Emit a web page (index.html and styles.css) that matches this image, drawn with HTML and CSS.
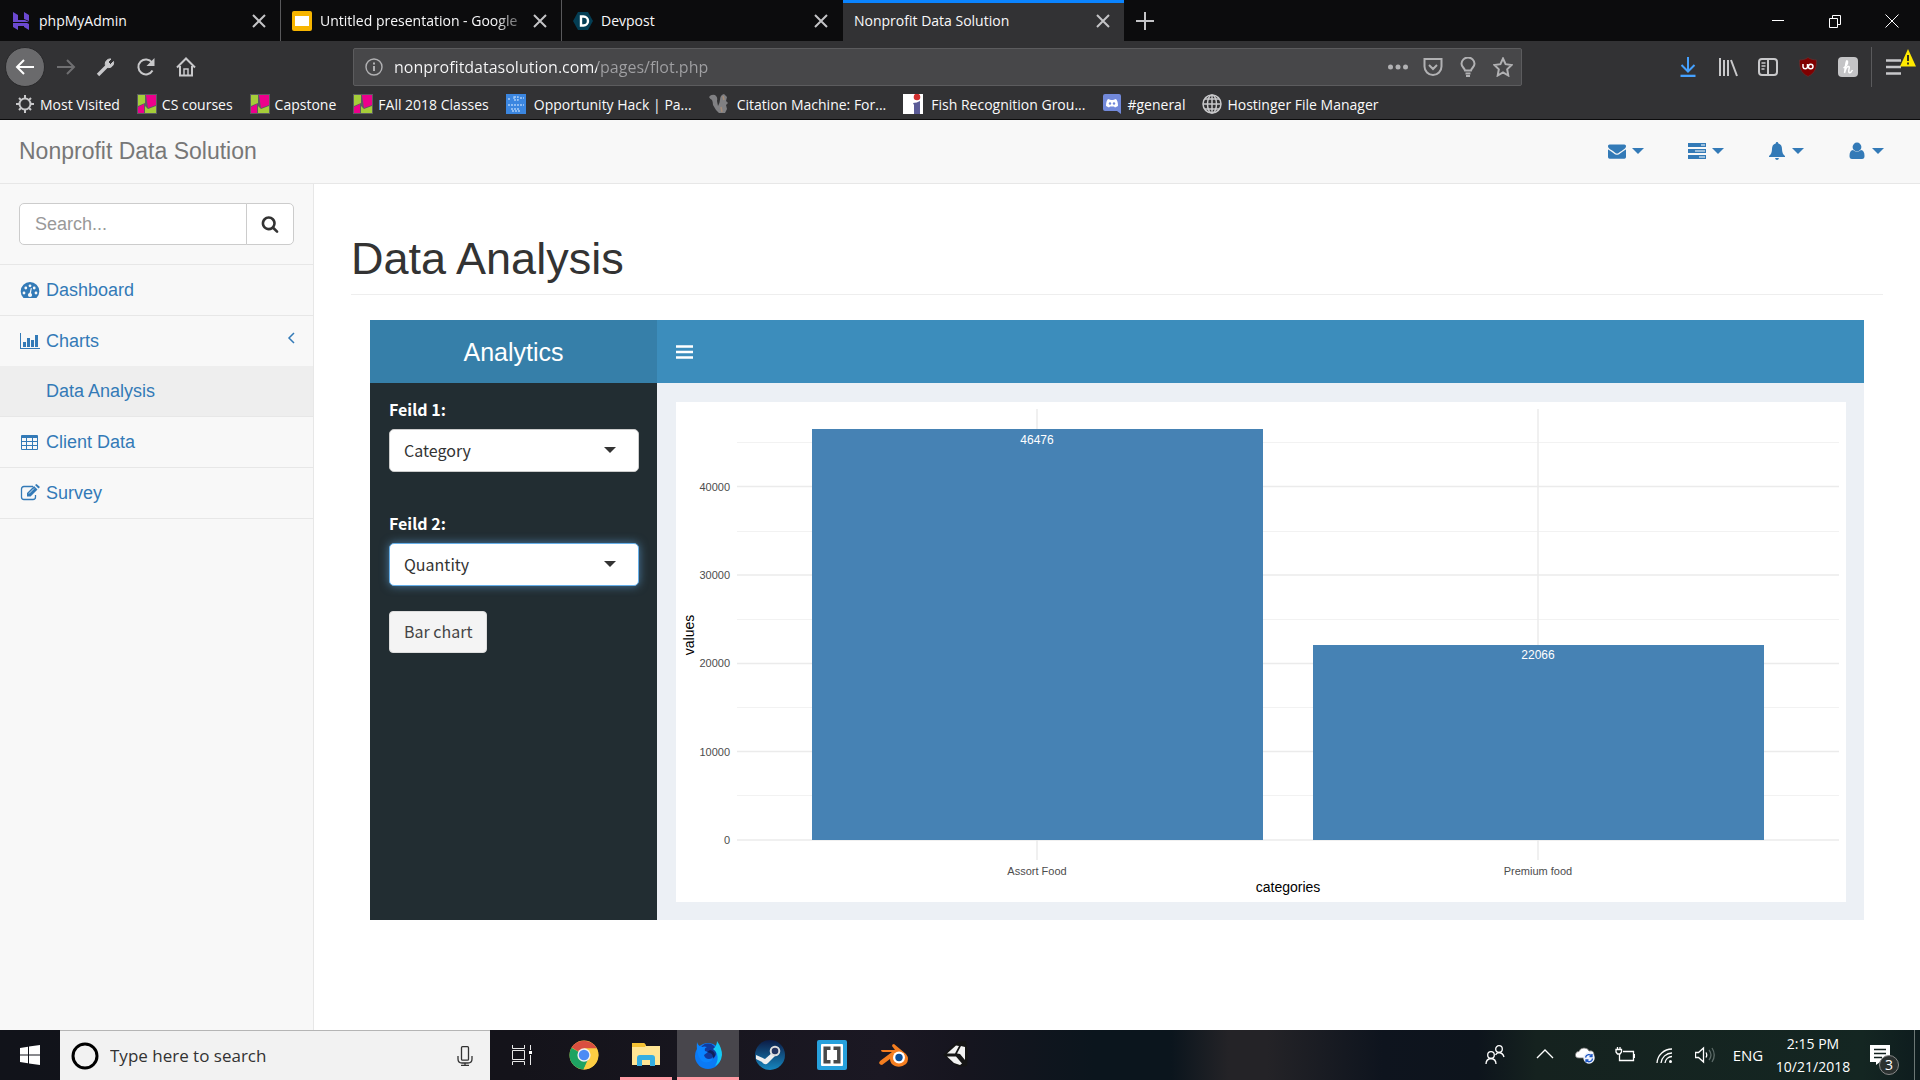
FILE: index.html
```html
<!DOCTYPE html>
<html lang="en">
<head>
<meta charset="utf-8">
<title>Nonprofit Data Solution</title>
<link rel="stylesheet" href="styles.css">
</head>
<body>
<header class="browser">
  <div class="tabstrip">
    <div class="tab">
      <svg class="favicon" viewBox="0 0 20 20"><g fill="#6b49d0"><path d="M2 1l5 3v5h7l4 2H2zM13 1l5 3v6l-5-2zM2 12h14l2 1v6l-5-3v-1H7v4l-5-3z"/></g></svg>
      <span class="tab-title">phpMyAdmin</span>
      <button class="tab-close" aria-label="Close tab"><svg viewBox="0 0 14 14"><path d="M1 1l12 12M13 1L1 13"/></svg></button>
    </div>
    <div class="tab">
      <svg class="favicon" viewBox="0 0 20 20"><rect width="20" height="20" rx="2" fill="#f7b500"/><rect x="3" y="5" width="14" height="10" fill="#fff"/></svg>
      <span class="tab-title tab-fade">Untitled presentation - Google</span>
      <button class="tab-close" aria-label="Close tab"><svg viewBox="0 0 14 14"><path d="M1 1l12 12M13 1L1 13"/></svg></button>
    </div>
    <div class="tab">
      <svg class="favicon" viewBox="0 0 20 20"><path d="M5 1h10l5 9-5 9H5L0 10z" fill="#043e54"/><path d="M8 5.500h2.500a4.500 4.500 0 0 1 0 9H8z" fill="none" stroke="#fff" stroke-width="2.400"/></svg>
      <span class="tab-title">Devpost</span>
      <button class="tab-close" aria-label="Close tab"><svg viewBox="0 0 14 14"><path d="M1 1l12 12M13 1L1 13"/></svg></button>
    </div>
    <div class="tab tab-active">
      <span class="tab-title">Nonprofit Data Solution</span>
      <button class="tab-close" aria-label="Close tab"><svg viewBox="0 0 14 14"><path d="M1 1l12 12M13 1L1 13"/></svg></button>
    </div>
    <button class="new-tab" aria-label="New tab"><svg viewBox="0 0 18 18"><path d="M9 0v18M0 9h18" stroke="#c4c4c6" stroke-width="2"/></svg></button>
    <div class="window-controls">
      <button aria-label="Minimize"><svg viewBox="0 0 14 14"><path d="M1 6.500h12"/></svg></button>
      <button aria-label="Restore"><svg viewBox="0 0 14 14"><path d="M1.500 4.500h8v9h-8zM4.500 4.500v-3h8v9h-3"/></svg></button>
      <button aria-label="Close"><svg viewBox="0 0 14 14"><path d="M.5.500l13 13M13.500.500l-13 13"/></svg></button>
    </div>
  </div>
  <div class="toolbar">
    <div class="nav-buttons">
      <button class="back" aria-label="Back"><svg viewBox="0 0 20 20"><path d="M19 10H2M9 3l-7 7 7 7"/></svg></button>
      <button class="forward" aria-label="Forward"><svg viewBox="0 0 20 20"><path d="M1 10h17M11 3l7 7-7 7"/></svg></button>
      <button aria-label="Developer tools"><svg viewBox="0 0 20 20"><path d="M2 18L11 9" stroke-width="3.400"/><path d="M17.500 4.500l-3 3-2.500-2.500 3-3A5 5 0 0 0 9.500 8.500l2 2A5 5 0 0 0 17.500 4.500z" fill="#c8c8ca" stroke-width="1"/></svg></button>
      <button aria-label="Reload"><svg viewBox="0 0 20 20"><path d="M16.500 13.500A7.500 7.500 0 1 1 16 5.500"/><path d="M18.500 1v8h-8z" fill="#c8c8ca" stroke="none"/></svg></button>
      <button aria-label="Home"><svg viewBox="0 0 20 20"><path d="M1 10.500L10 1.500l9 9M4 9v9.500h12V9"/><path d="M8 18v-6h4v6" stroke-width="1.500"/></svg></button>
    </div>
    <div class="urlbar">
      <svg class="icon18" viewBox="0 0 18 18"><g fill="none" stroke="#b1b1b3" stroke-width="1.400"><circle cx="9" cy="9" r="8"/><path d="M9 8v5M9 4.500v2" stroke-width="2"/></g></svg>
      <input class="url" type="text" aria-label="Address" value="nonprofitdatasolution.com/pages/flot.php">
      <div class="page-actions">
        <button aria-label="Page actions"><svg viewBox="0 0 20 20"><g fill="#b1b1b3" stroke="none"><circle cx="2.500" cy="10" r="2.500"/><circle cx="10" cy="10" r="2.500"/><circle cx="17.500" cy="10" r="2.500"/></g></svg></button>
        <button aria-label="Save to Pocket"><svg viewBox="0 0 20 20"><path d="M1.500 2h17v7.500a8.500 8.500 0 0 1-17 0zM6 8l4 4 4-4"/></svg></button>
        <button aria-label="Tips"><svg viewBox="0 0 20 20"><path d="M7 13.500C6.500 11 3.500 10 3.500 6.800a6.500 6.300 0 0 1 13 0C16.500 10 13.500 11 13 13.500zM7.500 16.500h5M8 19h4"/></svg></button>
        <button aria-label="Bookmark"><svg viewBox="0 0 20 20"><path d="M10 1.500l2.600 5.700 6 .8-4.400 4.300 1.100 6.200-5.300-3-5.300 3 1.100-6.200L1.400 8l6-.8z"/></svg></button>
      </div>
    </div>
    <div class="extensions">
      <button aria-label="Downloads"><svg viewBox="0 0 20 20"><path d="M10 0v14M3.500 8l6.500 6.500L16.500 8" stroke="#45a1ff"/><path d="M2.500 19h15" stroke="#45a1ff" stroke-width="2.600"/></svg></button>
      <button aria-label="Library"><svg viewBox="0 0 20 20"><path d="M2 1v18M6 3v16M10 3v16M13 3l6 16"/></svg></button>
      <button aria-label="Sidebars"><svg viewBox="0 0 20 20"><rect x="1" y="2" width="18" height="16" rx="3"/><path d="M10 2v16"/><path d="M3.500 6h4M3.500 9h4M3.500 12h3" stroke-width="1.300"/></svg></button>
      <button aria-label="uBlock"><svg viewBox="0 0 20 20"><path d="M10 .5c3 2 5.500 2.300 8.500 2.500 0 7-.5 12.500-8.500 16.500C2 15.500 1.500 10 1.500 3 4.500 2.800 7 2.500 10 .500z" fill="#800000" stroke="#5f3030" stroke-width=".8"/><path d="M5 7v3a2.300 2.300 0 0 0 4.500 0V7" stroke="#fff" stroke-width="1.500"/><circle cx="12.700" cy="9.500" r="2.300" stroke="#fff" stroke-width="1.500"/></svg></button>
      <button aria-label="Honey"><svg viewBox="0 0 20 20"><rect width="20" height="20" rx="4" fill="#c4c4c6" stroke="none"/><path d="M5.500 11Q10 8 9.500 4.500 8.500 2.500 7.800 7L6.500 16Q8 10 10 9.500t.8 3.500q-.3 3 1 2.800T14.500 13" stroke="#fff" stroke-width="1.500"/></svg></button>
      <button class="menu" aria-label="Menu"><svg viewBox="0 0 20 20"><path d="M2 3.500h15M2 10h15M2 16.500h15" stroke-width="2.400"/></svg><svg class="warning" viewBox="0 0 16 18"><path d="M8 0l8 17.500H0z" fill="#ffe900" stroke="none"/><path d="M8 6v6M8 13.500v2" stroke="#222" stroke-width="1.800"/></svg></button>
    </div>
  </div>
  <nav class="bookmarks">
    <a href="#"><svg viewBox="0 0 20 20"><circle cx="10" cy="10" r="5.500" fill="none" stroke="#c8c8ca" stroke-width="2"/><path d="M10 1v4M10 15v4M1 10h4M15 10h4M4 4l2 2M14 14l2 2M16 4l-2 2M6 14l-2 2" stroke="#c8c8ca" stroke-width="2"/></svg>Most Visited</a>
    <a href="#"><svg viewBox="0 0 20 20"><rect width="20" height="20" fill="#5c5c60"/><path d="M1 1h7v8L1 12z" fill="#a5cd39"/><path d="M9 1h10v10l-8 3z" fill="#ec008c"/><path d="M1 13l6-3v9H1z" fill="#ec008c"/><path d="M8 12l3 3 8-3v7H8z" fill="#a5cd39"/></svg>CS courses</a>
    <a href="#"><svg viewBox="0 0 20 20"><rect width="20" height="20" fill="#5c5c60"/><path d="M1 1h7v8L1 12z" fill="#a5cd39"/><path d="M9 1h10v10l-8 3z" fill="#ec008c"/><path d="M1 13l6-3v9H1z" fill="#ec008c"/><path d="M8 12l3 3 8-3v7H8z" fill="#a5cd39"/></svg>Capstone</a>
    <a href="#"><svg viewBox="0 0 20 20"><rect width="20" height="20" fill="#5c5c60"/><path d="M1 1h7v8L1 12z" fill="#a5cd39"/><path d="M9 1h10v10l-8 3z" fill="#ec008c"/><path d="M1 13l6-3v9H1z" fill="#ec008c"/><path d="M8 12l3 3 8-3v7H8z" fill="#a5cd39"/></svg>FAll 2018 Classes</a>
    <a class="wide" href="#"><svg viewBox="0 0 20 20"><rect width="20" height="20" fill="#3b86e0"/><path d="M2 5h2M8 3h4v3H8zM14 4h4M2 11h16M5 15h9M6 17h8" stroke="#a9cdf7" stroke-width="1.300" fill="none" stroke-dasharray="2 1"/></svg>Opportunity Hack | Pa...</a>
    <a class="wide" href="#"><svg viewBox="0 0 20 20"><path d="M0 3Q2 0 6 1q3 2 2 6l1 5q2-4 2-6 0-5 4-6l3 3-1 4 2 2-2 2 1 4-2 4h-6l-3-3-3-5q0-3-1-5-2-1-3-3z" fill="#808083"/><path d="M14 2l1 4M12 13l1 5" stroke="#a58c78" stroke-width="1.500"/></svg>Citation Machine: For...</a>
    <a class="wide" href="#"><svg viewBox="0 0 20 20"><rect width="20" height="20" fill="#fff"/><circle cx="14" cy="3" r="3.300" fill="#d22f2f"/><path d="M10 9q4 0 7-2v13h-6V11z" fill="#5b5b96"/></svg>Fish Recognition Grou...</a>
    <a href="#"><svg viewBox="0 0 20 20"><path d="M3 0h14q2 0 2 2v18l-4-3H3q-2 0-2-2V2q0-2 2-2z" fill="#7289da"/><path d="M4 12q0-5 2-7l3 1h2l3-1q2 2 2 7l-3 1.500-1-1H8l-1 1z" fill="#fff"/><circle cx="8" cy="9.500" r="1.200" fill="#7289da"/><circle cx="12" cy="9.500" r="1.200" fill="#7289da"/></svg>#general</a>
    <a href="#"><svg viewBox="0 0 20 20"><g fill="none" stroke="#c8c8ca" stroke-width="1.500"><circle cx="10" cy="10" r="9"/><ellipse cx="10" cy="10" rx="4.500" ry="9"/><path d="M10 1v18M1 10h18M3 5h14M3 15h14"/></g></svg>Hostinger File Manager</a>
  </nav>
</header>

<div class="page">
  <header class="navbar">
    <a class="brand" href="#">Nonprofit Data Solution</a>
    <nav class="top-links">
      <a href="#" aria-label="Messages"><svg viewBox="0 0 1792 1792"><path d="M1792 710v794q0 66-47 113t-113 47h-1472q-66 0-113-47t-47-113v-794q44 49 101 87 362 246 497 345 57 42 92.500 65.500t94.500 48 110 24.500h2q51 0 110-24.500t94.500-48 92.500-65.500q170-123 498-345 57-39 100-87zm0-294q0 79-49 151t-122 123q-376 261-468 325-10 7-42.500 31t-54 38-52 31.500-57.500 27-50 9h-2q-23 0-50-9t-57.500-27-52-31.500-54-38-42.500-31q-91-64-262-182.500t-205-142.500q-62-42-117-115.500t-55-136.500q0-78 41.500-130t118.500-52h1472q65 0 112.500 47t47.500 113z"/></svg><span class="caret"></span></a>
      <a href="#" aria-label="Tasks"><svg viewBox="0 0 18 18"><path d="M0 1h18v4H0zM0 7h18v4H0zM0 13h18v4H0z"/><path d="M13 2.500h4v1h-4zM7 8.500h10v1H7zM11 14.500h6v1h-6z" fill="#fff"/></svg><span class="caret"></span></a>
      <a href="#" aria-label="Alerts"><svg viewBox="0 0 18 18"><path d="M9 0q1.300 0 1.300 1.400Q14 2.300 14 7q0 5 3 7v1H1v-1q3-2 3-7 0-4.700 3.700-5.600Q7.700 0 9 0zM7 16h4q-.5 2-2 2t-2-2z"/></svg><span class="caret"></span></a>
      <a href="#" aria-label="User"><svg viewBox="0 0 18 18"><circle cx="9" cy="5" r="4.400"/><path d="M5 8q4 3.500 8 0 3.500.5 3.500 6 0 3-2.500 3H4q-2.500 0-2.500-3Q1.500 8.500 5 8z"/></svg><span class="caret"></span></a>
    </nav>
  </header>
  <div class="columns">
    <aside class="sidebar">
      <form class="search">
        <input type="text" placeholder="Search..." aria-label="Search">
        <button type="button" aria-label="Search"><svg viewBox="0 0 1792 1792"><path d="M1216 832q0-185-131.500-316.500t-316.500-131.500-316.500 131.500-131.500 316.500 131.500 316.500 316.500 131.500 316.500-131.500 131.500-316.500zm512 832q0 52-38 90t-90 38q-54 0-90-38l-343-342q-179 124-399 124-143 0-273.500-55.500t-225-150-150-225-55.500-273.500 55.500-273.500 150-225 225-150 273.500-55.500 273.500 55.500 225 150 150 225 55.500 273.500q0 220-124 399l343 343q37 37 37 90z" fill="#333"/></svg></button>
      </form>
      <ul class="menu-list">
        <li><a href="#"><svg viewBox="0 0 20 18"><path d="M3.500 17A9.300 9.300 0 1 1 16.500 17z"/><g fill="#f8f8f8"><circle cx="4" cy="12" r="1.400"/><circle cx="5.800" cy="7" r="1.400"/><circle cx="10" cy="4.800" r="1.400"/><circle cx="14.200" cy="7" r="1.400"/><circle cx="16" cy="12" r="1.400"/><circle cx="10" cy="14" r="2.100"/><path d="M9.300 13l1.500-6 1 .3-1 6z"/></g></svg>Dashboard</a></li>
        <li class="parent"><a href="#"><svg viewBox="0 0 20 18"><path d="M0 1h1v15h19v1H0zM3 10h3v5H3zM7 6h3v9H7zM11 8h3v7h-3zM15 3h3v12h-3z"/></svg>Charts<svg class="chevron" viewBox="0 0 8 12"><path d="M7 1L2 6l5 5" fill="none" stroke="#337ab7" stroke-width="1.500"/></svg></a></li>
        <li class="sub"><a href="#">Data Analysis</a></li>
        <li><a href="#"><svg viewBox="0 0 20 18"><path fill-rule="evenodd" d="M2 2h15q1 0 1 1v13q0 1-1 1H2q-1 0-1-1V3q0-1 1-1zM2 5v3h4V5zM7 5v3h5V5zM13 5v3h4V5zM2 9v3h4V9zM7 9v3h5V9zM13 9v3h4V9zM2 13v3h4v-3zM7 13v3h5v-3zM13 13v3h4v-3z"/></svg>Client Data</a></li>
        <li><a href="#"><svg viewBox="0 0 20 18"><path d="M13 2.500H4Q1.500 2.500 1.500 5v8q0 2.500 2.500 2.500h9q2.500 0 2.500-2.500v-2" fill="none" stroke="#337ab7" stroke-width="1.300"/><path d="M7 12.500V9l7-7 3.500 3.500-7 7zM15 1l1.500-1L20 3l-1.500 1.500z"/><path d="M9 9.500l5-5" stroke="#f8f8f8" stroke-width=".8"/></svg>Survey</a></li>
      </ul>
    </aside>
    <main class="content">
      <h1>Data Analysis</h1>
      <section class="dashboard">
        <div class="dash-brand">Analytics</div>
        <div class="dash-bar"><button aria-label="Toggle navigation"><svg viewBox="0 0 17 14"><path d="M0 1.500h17M0 7h17M0 12.500h17" stroke="#fff" stroke-width="2.600"/></svg></button></div>
        <form class="dash-side">
          <label for="field1">Feild 1:</label>
          <div class="select"><select id="field1"><option>Category</option></select></div>
          <label for="field2">Feild 2:</label>
          <div class="select focused"><select id="field2"><option>Quantity</option></select></div>
          <button type="button">Bar chart</button>
        </form>
        <div class="dash-main">
          <svg class="chart" viewBox="0 0 1170 500" role="img" aria-label="Values by category">
            <g class="minor"><path d="M61 40.500h1102M61 129.500h1102M61 217.500h1102M61 305.500h1102M61 393.500h1102"/></g>
            <g class="major"><path d="M61 84.500h1102M61 173h1102M61 261.500h1102M61 349.500h1102M61 438h1102M361 7v451M862 7v451"/></g>
            <g fill="#4682b4"><rect x="136" y="27" width="451" height="411"/><rect x="637" y="243" width="451" height="195"/></g>
            <g class="bar-label"><text x="361" y="42">46476</text><text x="862" y="257">22066</text></g>
            <g class="y-tick"><text x="54" y="89">40000</text><text x="54" y="177">30000</text><text x="54" y="265">20000</text><text x="54" y="354">10000</text><text x="54" y="442">0</text></g>
            <g class="x-tick"><text x="361" y="473">Assort Food</text><text x="862" y="473">Premium food</text></g>
            <g class="axis-title"><text x="612" y="490">categories</text><text transform="translate(18 233) rotate(-90)">values</text></g>
          </svg>
        </div>
      </section>
    </main>
  </div>
</div>

<footer class="taskbar">
  <button class="start" aria-label="Start"><svg viewBox="0 0 20 20"><path d="M0 3l8-1.200V9.500H0zM9 1.600L20 0v9.500H9zM0 10.500h8v7.700L0 17zM9 10.500h11V20L9 18.400z" fill="#fff"/></svg></button>
  <div class="cortana">
    <svg class="ring" viewBox="0 0 28 28"><circle cx="14" cy="14" r="12" fill="none" stroke="#000" stroke-width="3"/></svg>
    <input type="text" placeholder="Type here to search" aria-label="Type here to search">
    <svg class="mic" viewBox="0 0 16 20"><g fill="none" stroke="#333" stroke-width="1.300"><rect x="4.500" y=".7" width="7" height="13.500" rx="1"/><path d="M1 10v3q0 4 4 4h6q4 0 4-4v-3M8 17v2.500M4 19.300h8"/></g></svg>
  </div>
  <nav class="apps">
    <button aria-label="Task View"><svg class="small" viewBox="0 0 20 20"><g fill="none" stroke="#e8e8e8"><path d="M.5 5.500h12v9H.5zM.5 0v3.500h12V0M.5 20v-3.500h12V20M18.500 0v5M18.500 10v10"/></g><path d="M17 6h3v3h-3z" fill="#fff"/></svg></button>
    <button aria-label="Chrome"><svg viewBox="0 0 28 28"><circle cx="14" cy="14" r="13.500" fill="#f9cc45"/><path d="M14 14L2.500 7A13.500 13.500 0 0 1 26 8H14z" fill="#d94f40"/><path d="M14 14L2.300 7.200A13.500 13.500 0 0 0 13.500 27.500L19.500 17z" fill="#1ea362"/><path d="M14 14h5.500l-6 13.500A13.500 13.500 0 0 0 26 8H14z" fill="#fccd43"/><circle cx="14" cy="14" r="6.200" fill="#f1f1f1"/><circle cx="14" cy="14" r="4.900" fill="#4c8bf5"/></svg></button>
    <button class="running" aria-label="File Explorer"><svg viewBox="0 0 28 28"><path d="M0 2h12l2 3h14v19H0z" fill="#ffe594"/><path d="M0 2h12l2 2-1 2H0z" fill="#f5c234"/><path d="M5 25V17q0-3 3-3h12q3 0 3 3v8h-5v-6h-8v6z" fill="#35aee2"/></svg></button>
    <button class="active" aria-label="Firefox"><svg viewBox="0 0 28 28"><circle cx="14" cy="15" r="13" fill="#0b7af5"/><circle cx="14" cy="11" r="8.500" fill="#123a9c"/><path d="M3 1q1 4 5 5 2-1 5 0-3 1-2 4l3 1-4 3q1 4 5 4 3 0 4-2 0 4-4 5-7 2-10-5Q2 10 3 1z" fill="#0a84ff"/><path d="M16 9q5 1 5 6l-2 2q0-4-3-5l-3-1q2-1 3-2z" fill="#10205a"/><path d="M23 0q5 7 5 14-1 8-7 11 4-6 2-12-1-3-4-5 4-3 4-8z" fill="#15c9f5"/></svg></button>
    <button aria-label="Steam"><svg viewBox="0 0 30 30"><defs><linearGradient id="st" x2="0" y2="1"><stop stop-color="#0c1b44"/><stop offset="1" stop-color="#1687c0"/></linearGradient></defs><circle cx="15" cy="15" r="15" fill="url(#st)"/><path d="M1 15l9 4 8-7 3 3-8 8q-3 3-6-1l-6-3z" fill="#eee"/><circle cx="20" cy="11" r="4.300" fill="#24345f" stroke="#ddd" stroke-width="2"/></svg></button>
    <button aria-label="Brackets"><svg viewBox="0 0 30 30"><rect width="30" height="30" rx="2" fill="#27a0dc"/><rect x="4" y="4" width="22" height="22" rx="1" fill="#fff"/><path d="M13.500 8.200H8.200v13.600h5.300M16.500 8.200h5.300v13.600h-5.300" fill="none" stroke="#494949" stroke-width="3.500"/></svg></button>
    <button aria-label="Blender"><svg viewBox="0 0 30 30"><path d="M1 21L13 12H4q-2 0-2-2h14l-3-4q0-2 2-2l12 10q4 5 0 10-5 4-11 2-5-2-5-7l-8 6q-2 0-3-2z" fill="#f57e20"/><circle cx="20" cy="17.500" r="6" fill="#fff"/><circle cx="20" cy="17.500" r="3.700" fill="#0b4d97"/></svg></button>
    <button aria-label="Unity"><svg viewBox="0 0 30 30"><path d="M2 15L16 2l9-1 2 12-1 13-9 1z" fill="#151515"/><path d="M6 13.500l9-8 3 .5-4 7.500zM20 6l4 1v13l-5-6-3-.5zM6 16.500h9l6 7-2 1.500-6-2z" fill="#f2f2f2"/></svg></button>
  </nav>
  <div class="tray">
    <button aria-label="People"><svg viewBox="0 0 20 20"><circle cx="6" cy="10" r="3.300"/><circle cx="14" cy="4" r="3.300"/><path d="M1 19q0-5 5-5.500 5 .5 5 5.500M10.500 10Q12 7.500 14 7.500q4 .5 5 4.500"/></svg></button>
    <button class="up" aria-label="Show hidden icons"><svg viewBox="0 0 20 20"><path d="M2 13l8-8 8 8"/></svg></button>
    <button aria-label="OneDrive"><svg viewBox="0 0 20 20"><path d="M4 13q-4 0-3.500-3.500T4 6.500Q5 3 9 3t5 3q5-1 5 4v3z" fill="#fff" stroke="#777" stroke-width=".8"/><circle cx="14" cy="13" r="5.700" fill="#eef3fc" stroke="none"/><path d="M10.500 12.500a3.500 3.500 0 0 1 6.500-1M17.500 13.500a3.500 3.500 0 0 1-6.500 1.500M17 9v2.500h-2.500M11 17.500V15h2.500" stroke="#1d56c4"/></svg></button>
    <button aria-label="Battery"><svg viewBox="0 0 20 20"><path d="M4.500 9v6.500h14v-9H8M19.500 9v4M1 4.500h5.500V7L5 9H2.500L1 7zM2.500 2v2.500M5 2v2.500"/></svg></button>
    <button aria-label="Network"><svg viewBox="0 0 20 20"><path d="M2 18A15 15 0 0 1 17 4M6 18A11 11 0 0 1 17 8M10 18a7 7 0 0 1 7-6.500"/><circle cx="15.500" cy="16.500" r="1.500" fill="#fff" stroke="none"/></svg></button>
    <button aria-label="Volume"><svg viewBox="0 0 20 20"><path d="M.5 7.500h3L8.500 3v14l-5-4.500h-3zM11 7.500q1.500 2.500 0 5"/><path d="M14 5q4 5 0 10M17 3q4.500 7 0 14" stroke="#5d6b68"/></svg></button>
    <span class="lang">ENG</span>
    <div class="clock"><span>2:15 PM</span><span>10/21/2018</span></div>
    <button class="notify" aria-label="Notifications"><svg viewBox="0 0 20 20"><path d="M0 0h20v17H10l-4 3v-3H0z" fill="#fff" stroke="none"/><path d="M4 4.500h12M4 8.500h12M4 12.500h8" stroke="#12201e"/></svg><span class="badge">3</span></button>
  </div>
</footer>
</body>
</html>
```
FILE: styles.css
```css
* { box-sizing: border-box; }
body {
  margin: 0;
  min-height: 100vh;
  display: flex;
  flex-direction: column;
  font-family: "Liberation Sans", Arial, sans-serif;
  color: #333;
  background: #fff;
}
button { margin: 0; padding: 0; border: 0; background: none; font: inherit; color: inherit; }
input, select { font: inherit; }
a { text-decoration: none; }
svg { display: block; flex: none; }

/* Browser window */
.browser {
  background: #323234;
  color: #f9f9fa;
  font-family: "Open Sans", sans-serif;
  font-size: 14px;
  border-bottom: 1px solid #0c0c0d;
}
.tabstrip { display: flex; height: 41px; background: #0c0c0d; }
.tab {
  flex: 0 1 281px;
  min-width: 0;
  display: flex;
  align-items: center;
  gap: 8px;
  padding: 0 14px 0 11px;
  border-right: 1px solid #59595b;
}
.tab:nth-child(3) { border-right-color: #0c0c0d; }
.tab-active { background: #323234; border-top: 3px solid #0a84ff; border-right: 0; padding-bottom: 3px; }
.favicon { width: 20px; height: 20px; }
.tab-title { flex: 1; min-width: 0; white-space: nowrap; }
.tab-fade { mask-image: linear-gradient(90deg, #000 85%, rgba(0, 0, 0, .2)); }
.tab-close svg { width: 14px; height: 14px; }
.tab-close path { stroke: #c4c4c6; stroke-width: 2; }
.new-tab { width: 42px; display: grid; place-items: center; }
.new-tab svg { width: 18px; height: 18px; }
.window-controls { margin-left: auto; display: flex; }
.window-controls button { width: 57px; display: grid; place-items: center; }
.window-controls svg { width: 14px; height: 14px; fill: none; stroke: #fff; }

.toolbar { display: flex; align-items: center; height: 51px; }
.toolbar button { display: grid; place-items: center; width: 40px; height: 40px; }
.toolbar button svg { width: 20px; height: 20px; fill: none; stroke: #c8c8ca; stroke-width: 2; }
.nav-buttons { display: flex; margin: 0 147px 0 5px; }
.toolbar .back { border-radius: 50%; background: #6a6a6c; border: 1px solid #29292b; margin-right: 1px; }
.toolbar .back svg { stroke: #fff; }
.toolbar .forward svg { stroke: #6f6f71; }
.urlbar {
  flex: 1;
  display: flex;
  align-items: center;
  height: 38px;
  padding-left: 11px;
  background: #474749;
  border: 1px solid #5c5c5e;
  border-radius: 2px;
}
.icon18 { width: 18px; height: 18px; }
.url {
  flex: 1;
  min-width: 0;
  margin-left: 11px;
  padding: 0;
  border: 0;
  font-size: 16px;
  color: transparent;
  background: linear-gradient(90deg, #f9f9fa 203px, #a0a0a3 203px);
  background-clip: text;
  -webkit-background-clip: text;
}
.page-actions { display: flex; padding-right: 1px; }
.toolbar .page-actions button { width: 35px; }
.toolbar .page-actions svg { stroke: #b1b1b3; }
.extensions { display: flex; margin-left: 146px; padding-right: 6px; }
.toolbar .menu { position: relative; width: 46px; margin-left: 3px; padding-right: 2px; margin-right: -3px; border-left: 1px solid #5a5a5c; }
.toolbar .menu .warning { position: absolute; right: 1px; top: 2px; width: 16px; height: 18px; }

.bookmarks { display: flex; height: 27px; padding: 0 15px; gap: 17px; }
.bookmarks a { display: flex; align-items: center; gap: 5px; color: #f9f9fa; height: 24px; white-space: nowrap; }
.bookmarks .wide { gap: 8px; }
.bookmarks svg { width: 20px; height: 20px; }

/* Site */
.page { flex: 1; display: flex; flex-direction: column; }
.navbar {
  display: flex;
  align-items: center;
  justify-content: space-between;
  height: 64px;
  padding: 0 36px 0 19px;
  background: #f8f8f8;
  border-bottom: 1px solid #e7e7e7;
}
.brand { font-size: 23px; color: #777; }
.top-links { display: flex; gap: 44px; padding-bottom: 2px; }
.top-links a { display: flex; align-items: center; gap: 6px; }
.top-links svg { width: 18px; height: 18px; fill: #337ab7; }
.caret { border: 6px solid transparent; border-top-color: #337ab7; border-bottom: 0; }
.columns { flex: 1; display: flex; }
.sidebar { flex: none; width: 314px; background: #f8f8f8; border-right: 1px solid #e7e7e7; font-size: 18px; }
.search { display: flex; padding: 19px; border-bottom: 1px solid #e7e7e7; }
.search input {
  flex: 1;
  min-width: 0;
  height: 42px;
  padding: 0 15px;
  border: 1px solid #ccc;
  border-radius: 5px 0 0 5px;
  background: #fff;
}
.search input::placeholder { color: #999; }
.search button {
  width: 48px;
  margin-left: -1px;
  display: grid;
  place-items: center;
  background: #fff;
  border: 1px solid #ccc;
  border-radius: 0 5px 5px 0;
}
.search button svg { width: 18px; height: 18px; }
.menu-list { list-style: none; margin: 0; padding: 0; }
.menu-list li { border-bottom: 1px solid #e7e7e7; }
.menu-list .parent { border-bottom: 0; }
.menu-list a { display: flex; align-items: center; gap: 6px; height: 50px; padding: 0 18px 0 20px; color: #337ab7; }
.menu-list svg { width: 20px; height: 18px; fill: #337ab7; }
.menu-list .chevron { width: 8px; height: 12px; margin: 0 0 6px auto; }
.menu-list .sub { background: #eee; }
.menu-list .sub a { padding-left: 46px; }

.content { flex: 1; min-width: 0; padding: 50px 37px 0; }
h1 { margin: 0 0 25px; padding-bottom: 10px; font-size: 45px; line-height: 50px; font-weight: 400; border-bottom: 1px solid #eee; }
.dashboard { display: grid; grid-template-columns: 287px 1fr; grid-template-rows: 63px auto; margin: 0 19px; }
.dash-brand { display: grid; place-items: center; padding-top: 2px; background: #367fa9; color: #fff; font-size: 25px; }
.dash-bar { display: flex; align-items: center; padding-left: 19px; background: #3c8dbc; }
.dash-bar svg { width: 17px; height: 14px; }
.dash-side {
  display: flex;
  flex-direction: column;
  padding: 15px 18px 0 19px;
  background: #222d32;
  font-family: "Noto Sans CJK SC", sans-serif;
  font-size: 16px;
}
.dash-side label { line-height: 22px; margin-bottom: 9px; font-weight: 700; color: #fff; }
.select { position: relative; margin-bottom: 40px; }
.select::after {
  content: "";
  position: absolute;
  right: 23px;
  top: 18px;
  border: 6px solid transparent;
  border-top-color: #333;
  border-bottom: 0;
}
.select select {
  display: block;
  width: 100%;
  height: 43px;
  padding: 0 14px 2px;
  appearance: none;
  border: 1px solid #ccc;
  border-radius: 5px;
  background: #fff;
  color: #333;
}
.focused { margin-bottom: 25px; }
.focused select { border-color: #66afe9; box-shadow: 0 0 10px rgba(102, 175, 233, .6); }
.dash-side button {
  align-self: flex-start;
  height: 42px;
  padding: 0 14px 2px;
  background: #f4f4f4;
  border: 1px solid #ddd;
  border-radius: 4px;
  color: #444;
}
.dash-main { padding: 19px 18px 18px 19px; background: #ecf0f5; }
.chart { width: 100%; height: auto; background: #fff; font-family: "Liberation Sans", Arial, sans-serif; }
.minor { stroke: #f2f2f2; }
.major { stroke: #ebebeb; stroke-width: 1.500; }
.bar-label { font-size: 12px; fill: #fff; text-anchor: middle; }
.y-tick { font-size: 11px; fill: #4d4d4d; text-anchor: end; }
.x-tick { font-size: 11px; fill: #4d4d4d; text-anchor: middle; }
.axis-title { font-size: 14px; fill: #000; text-anchor: middle; }

/* Desktop taskbar */
.taskbar {
  display: flex;
  height: 50px;
  color: #fff;
  font-family: "Open Sans", sans-serif;
  background: linear-gradient(90deg, #11131a 0, #14131a 27%, #1b1823 46%, #16151f 50%, #0b151d 57%, #0b151d 61%, #242327 64%, #242327 66%, #0e141e 72%, #0d141c 77%, #15221f 80%, #142622 97%, #0e1c1e 100%);
}
.taskbar button { display: grid; place-items: center; }
.start { width: 60px; }
.start svg { width: 20px; height: 20px; }
.cortana { display: flex; align-items: center; width: 430px; padding: 0 17px 0 11px; background: #f2f2f2; border-top: 1px solid #b5b5b5; }
.ring { width: 28px; height: 28px; }
.cortana input { flex: 1; min-width: 0; margin-left: 11px; padding: 0; border: 0; background: none; font-size: 17px; }
.cortana input::placeholder { color: #333; }
.mic { width: 16px; height: 20px; }
.apps { display: flex; padding-left: 1px; }
.apps button { width: 62px; height: 50px; }
.apps svg { width: 30px; height: 30px; }
.apps .small { width: 20px; height: 20px; }
.apps .running svg, .apps .active svg { width: 28px; height: 28px; }
.apps .running { border-bottom: 3px solid #ff9aa4; border-top: 3px solid transparent; width: 52px; margin: 0 5px; }
.apps .active { background: #48464c; border-bottom: 3px solid #ff9aa4; border-top: 3px solid #48464c; }
.tray { display: flex; align-items: center; margin-left: auto; padding-right: 5px; font-size: 15px; }
.tray button { width: 40px; height: 50px; }
.tray svg { width: 20px; height: 20px; fill: none; stroke: #fff; stroke-width: 1.300; }
.tray .up { margin-left: 10px; }
.lang { width: 46px; text-align: center; }
.clock { display: flex; flex-direction: column; width: 84px; line-height: 23px; text-align: center; white-space: nowrap; font-size: 14px; }
.tray .notify { position: relative; width: 60px; padding-right: 9px; border-right: 1px solid #6c7775; }
.badge {
  position: absolute;
  left: 24px;
  top: 25px;
  width: 20px;
  height: 20px;
  line-height: 18px;
  border: 1px solid #888;
  border-radius: 50%;
  background: #2b3130;
  font-size: 14px;
}
```
